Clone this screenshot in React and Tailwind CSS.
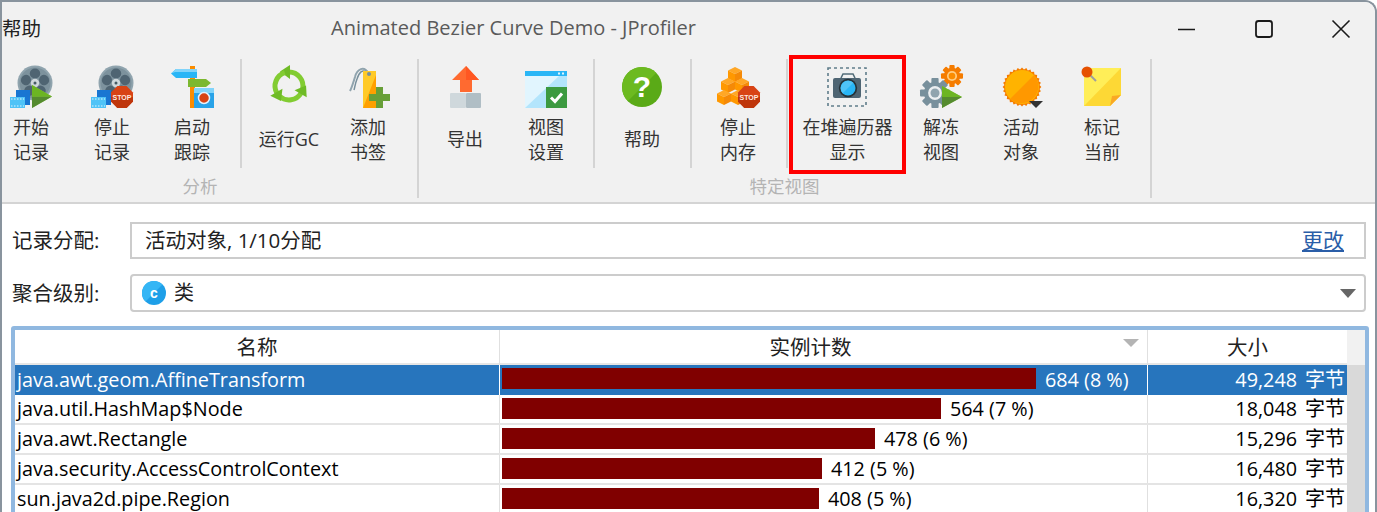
const Stop = ({ cx = 34, cy = 34, r = 11 }) => {
  const k = r * 0.42;
  const pts = [[-k,-r],[k,-r],[r,-k],[r,k],[k,r],[-k,r],[-r,k],[-r,-k]].map(([x,y]) => `${cx+x},${cy+y}`).join(" ");
  return (
    <g>
      <polygon points={pts} fill="#d84315" />
      <polygon points={`${cx-r},${cy} ${cx+r},${cy} ${cx+r},${cy+k} ${cx+k},${cy+r} ${cx-k},${cy+r} ${cx-r},${cy+k}`} fill="#bf360c" />
      <text x={cx} y={cy + 2.6} textAnchor="middle" fontSize="7" fontWeight="700" fill="#ffe9e0" fontFamily="Liberation Sans, sans-serif">STOP</text>
    </g>
  );
};

const Reel = () => (
  <g>
    <circle cx="28" cy="20" r="17.5" fill="#90a4ae" />
    <circle cx="28" cy="20" r="15.5" fill="#7d929d" />
    {[0, 72, 144, 216, 288].map((a) => (
      <ellipse key={a} cx="28" cy="10.5" rx="5.2" ry="5" fill="#4f6472" transform={`rotate(${a} 28 20)`} />
    ))}
    <circle cx="28" cy="20" r="4.2" fill="#cfd8dc" />
    <circle cx="28" cy="20" r="1.5" fill="#455a64" />
  </g>
);

const Strip = () => (
  <g>
    <rect x="9" y="27" width="14" height="15" fill="#1976d2" />
    <rect x="3" y="34" width="15" height="11" fill="#4fc3f7" />
    <path d="M4 36h13M4 43h13" stroke="#e1f5fe" strokeWidth="1" strokeDasharray="1.5 1.5" />
  </g>
);

const Play = ({ x = 25, y = 22, w = 20, h = 23 }) => (
  <g>
    <polygon points={`${x},${y} ${x + w},${y + h / 2} ${x},${y + h}`} fill="#8bc34a" />
    <polygon points={`${x},${y + h / 2} ${x + w},${y + h / 2} ${x},${y + h}`} fill="#558b2f" />
    <polygon points={`${x},${y} ${x + w},${y + h / 2} ${x},${y + h / 2}`} fill="#6cb523" />
  </g>
);

const Gear = ({ cx, cy, r, color, hole, ring }) => (
  <g>
    {[0, 45, 90, 135, 180, 225, 270, 315].map((a) => (
      <rect key={a} x={cx - r * 0.24} y={cy - r} width={r * 0.48} height={r * 0.5} rx="1" fill={color} transform={`rotate(${a} ${cx} ${cy})`} />
    ))}
    <circle cx={cx} cy={cy} r={r * 0.74} fill={color} />
    <circle cx={cx} cy={cy} r={r * 0.46} fill={ring} />
    <circle cx={cx} cy={cy} r={r * 0.3} fill={hole} />
  </g>
);

const Cube = ({ cx, y }) => (
  <g>
    <polygon points={`${cx},${y} ${cx + 7},${y + 3.5} ${cx},${y + 7} ${cx - 7},${y + 3.5}`} fill="#ffa726" />
    <polygon points={`${cx - 7},${y + 3.5} ${cx},${y + 7} ${cx},${y + 15} ${cx - 7},${y + 11.5}`} fill="#ff9800" />
    <polygon points={`${cx + 7},${y + 3.5} ${cx},${y + 7} ${cx},${y + 15} ${cx + 7},${y + 11.5}`} fill="#f58a07" />
  </g>
);

const burst = (() => {
  const p = [];
  for (let i = 0; i < 56; i++) {
    const a = (i / 56) * Math.PI * 2;
    const r = i % 2 ? 17.6 : 19.4;
    p.push(`${(25 + r * Math.cos(a)).toFixed(2)},${(24 + r * Math.sin(a)).toFixed(2)}`);
  }
  return p.join(" ");
})();

const Svg = ({ children }) => (
  <svg width="48" height="48" viewBox="0 0 48 48" className="shrink-0">{children}</svg>
);

const icons = {
  start: <Svg><Reel /><Strip /><Play /></Svg>,
  stop: <Svg><Reel /><Strip /><Stop /></Svg>,
  trace: (
    <Svg>
      <rect x="22" y="3" width="5" height="42" fill="#fb8c00" />
      <polygon points="3,10.5 8,6 29,6 29,15 8,15" fill="#29b6f6" />
      <polygon points="3,10.5 8,6 29,6 29,9 7,9" fill="#81d4fa" />
      <polygon points="20,16 38,16 43,20 38,24 20,24" fill="#7cb82f" />
      <rect x="26" y="25" width="20" height="20" fill="#29a3e8" />
      <rect x="26" y="25" width="20" height="5" fill="#81d4fa" />
      <circle cx="36" cy="35" r="5.5" fill="#d84315" stroke="#e3f2fd" strokeWidth="1.5" />
    </Svg>
  ),
  gc: (
    <Svg>
      {[0, 120, 240].map((a) => (
        <g key={a} transform={`rotate(${a} 24 23)`}>
          <path d="M37.6 26 A14 14 0 0 0 24 9" fill="none" stroke="#82cc32" strokeWidth="5" />
          <polygon points="25,2 25,16 15,8.5" fill="#6fbb26" />
        </g>
      ))}
    </Svg>
  ),
  bookmark: (
    <Svg>
      <path d="M25 11 C20 2 13 6 11 14 C9 20 8 24 6 28" fill="none" stroke="#90a4ae" strokeWidth="2" />
      <path d="M24 10 C18 5 15 10 13 16 C11 21 11 24 10 27" fill="none" stroke="#78909c" strokeWidth="1.5" />
      <polygon points="19,8 32,8 32,45 19,45" fill="#ffca28" />
      <polygon points="32,12 32,45 19,45" fill="#ffa000" />
      <circle cx="25" cy="11" r="2" fill="#78909c" />
      <rect x="32" y="24" width="7" height="21" fill="#689f38" />
      <rect x="25" y="31" width="21" height="7" fill="#689f38" />
    </Svg>
  ),
  export: (
    <Svg>
      <polygon points="25,3 38,17 31,17 31,29 19,29 19,17 11,17" fill="#ff6a30" />
      <polygon points="25,3 38,17 31,17 25,17" fill="#ff5722" />
      <rect x="9" y="30" width="16" height="15" rx="1" fill="#cfd8dc" />
      <rect x="25" y="30" width="15" height="15" rx="1" fill="#b0bec5" />
    </Svg>
  ),
  viewset: (
    <Svg>
      <rect x="3" y="8" width="42" height="37" fill="#b3e5fc" />
      <polygon points="3,13 37,13 3,45" fill="#e1f5fe" />
      <rect x="3" y="8" width="42" height="5" fill="#29b6f6" />
      <rect x="36" y="9.5" width="2" height="2" fill="#e1f5fe" />
      <rect x="40" y="9.5" width="2" height="2" fill="#e1f5fe" />
      <rect x="24" y="24" width="21" height="21" fill="#3c9a40" />
      <path d="M29 34.5 L33 38.5 L40 30.5" fill="none" stroke="#fff" strokeWidth="3" />
    </Svg>
  ),
  help: (
    <Svg>
      <circle cx="24" cy="24" r="20" fill="#5aaa17" />
      <path d="M24 4 A20 20 0 0 0 9.9 38.1 L38.1 9.9 A20 20 0 0 0 24 4Z" fill="#6cba20" />
      <text x="24" y="34" textAnchor="middle" fontSize="30" fontWeight="700" fill="#fff" fontFamily="Liberation Sans, sans-serif">?</text>
    </Svg>
  ),
  heap: (
    <Svg>
      <Cube cx={21} y={4} />
      <Cube cx={14} y={15} />
      <Cube cx={28} y={15} />
      <Cube cx={10} y={27} />
      <Cube cx={24} y={27} />
      <Stop cx={35} cy={34} r={11} />
    </Svg>
  ),
  camera: (
    <Svg>
      <rect x="4" y="5" width="38" height="38" fill="none" stroke="#607d8b" strokeWidth="1.6" strokeDasharray="3 3" />
      <path d="M17 15 L19 11 H29 L31 15" fill="none" stroke="#546e7a" strokeWidth="1.6" />
      <rect x="9" y="15" width="28" height="20" rx="2" fill="#4f6573" />
      <circle cx="24" cy="25" r="9.2" fill="#263238" />
      <circle cx="24" cy="25" r="7.5" fill="#29b6f6" />
      <path d="M18.7 30.3 A7.5 7.5 0 0 1 29.3 19.7Z" fill="#4fc3f7" />
    </Svg>
  ),
  thaw: (
    <Svg>
      <Gear cx={35} cy={13} r={11} color="#f57c00" ring="#ffcc80" hole="#fb8c00" />
      <Gear cx={18} cy={30} r={15} color="#78909c" ring="#eceff1" hole="#90a4ae" />
      <Play x={25} y={23} w={20} h={22} />
    </Svg>
  ),
  live: (
    <Svg>
      <polygon points={burst} fill="#f57c00" />
      <circle cx="25" cy="24" r="17" fill="#ffb300" />
      <path d="M37 12 A17 17 0 0 1 13 36Z" fill="#ff9800" />
      <polygon points="32,38 46,38 39,45" fill="#333" />
    </Svg>
  ),
  mark: (
    <Svg>
      <polygon points="6,5 43,5 43,32 32,43 6,43" fill="#ffee58" />
      <polygon points="43,5 43,32 32,43 6,43" fill="#fdd835" />
      <polygon points="43,32 34,33 32,43" fill="#f9a825" />
      <path d="M10 10 L18 18" stroke="#9e9e9e" strokeWidth="2" />
      <circle cx="9" cy="9" r="5.5" fill="#e65100" />
    </Svg>
  ),
};

const Tool = ({ icon, lines, className }) => (
  <div className={`flex h-[119px] shrink-0 flex-col items-center pt-[8px] ${className}`}>
    {icons[icon]}
    <div className={`mt-[4px] flex h-[50px] flex-col items-center justify-center whitespace-nowrap text-[18px] leading-[25px] text-[#333] ${lines.length === 1 ? "pb-[2px]" : ""}`}>
      {lines.map((l) => <span key={l}>{l}</span>)}
    </div>
  </div>
);

const Sep = ({ className = "" }) => <div className={`mt-[4px] h-[109px] w-[2px] shrink-0 bg-[#d4d4d4] ${className}`} />;
const GroupSep = ({ className = "" }) => <div className={`mt-[4px] h-[139px] w-[2px] shrink-0 bg-[#d4d4d4] ${className}`} />;

const rows = [
  { name: "java.awt.geom.AffineTransform", bar: "w-[534px]", count: "684 (8 %)", num: "49,248", sel: true },
  { name: "java.util.HashMap$Node", bar: "w-[439px]", count: "564 (7 %)", num: "18,048" },
  { name: "java.awt.Rectangle", bar: "w-[373px]", count: "478 (6 %)", num: "15,296" },
  { name: "java.security.AccessControlContext", bar: "w-[320px]", count: "412 (5 %)", num: "16,480" },
  { name: "sun.java2d.pipe.Region", bar: "w-[317px]", count: "408 (5 %)", num: "16,320" },
];

export default function App() {
  return (
    <div className="flex h-[512px] w-[1377px] flex-col overflow-hidden rounded-tr-[12px] border-x-2 border-t-2 border-[#89949e] bg-white font-['Open_Sans','Noto_Sans_CJK_SC',sans-serif] text-black">
      {/* title bar */}
      <div className="relative flex h-[53px] shrink-0 items-center justify-between bg-[#f1f1f1]">
        <span className="text-[19.5px] text-[#222]">帮助</span>
        <span className="absolute left-[329px] top-[11px] whitespace-nowrap text-[20px] leading-[30px] text-[#5a5a5a]">Animated Bezier Curve Demo - JProfiler</span>
        <svg width="198" height="24" viewBox="0 0 198 24" fill="none" stroke="#1a1a1a">
          <path d="M1 12.5 H18" strokeWidth="1.3" />
          <rect x="79" y="4" width="16" height="16" rx="2.5" strokeWidth="1.8" />
          <path d="M155.5 3.5 L172.5 20.5 M172.5 3.5 L155.5 20.5" strokeWidth="1.6" />
        </svg>
      </div>

      {/* toolbar */}
      <div className="flex h-[149px] shrink-0 border-b-2 border-[#d4d4d4] bg-[#f1f1f1]">
        <div className="flex w-[415px] shrink-0 flex-col">
          <div className="flex">
            <Tool icon="start" lines={["开始", "记录"]} className="w-[58px]" />
            <Tool icon="stop" lines={["停止", "记录"]} className="ml-[12px] w-[80px]" />
            <Tool icon="trace" lines={["启动", "跟踪"]} className="w-[80px]" />
            <Sep className="ml-[8px]" />
            <Tool icon="gc" lines={["运行GC"]} className="w-[94px]" />
            <Tool icon="bookmark" lines={["添加", "书签"]} className="w-[64px]" />
          </div>
          <div className="pr-[19px] text-center text-[17.5px] leading-[24px] text-[#b4b4b4]">分析</div>
        </div>
        <GroupSep />
        <div className="flex w-[731px] shrink-0 flex-col">
          <div className="flex">
            <Tool icon="export" lines={["导出"]} className="w-[92px]" />
            <Tool icon="viewset" lines={["视图", "设置"]} className="w-[70px]" />
            <Sep className="ml-[12px]" />
            <Tool icon="help" lines={["帮助"]} className="w-[94px]" />
            <Sep className="ml-[1px]" />
            <Tool icon="heap" lines={["停止", "内存"]} className="w-[92px]" />
            <Sep className="ml-[2px]" />
            <div className="ml-[1px] flex h-[119px] w-[117px] shrink-0 flex-col items-center border-4 border-[#f00] pt-[4px]">
              {icons.camera}
              <div className="flex h-[50px] flex-col items-center justify-center whitespace-nowrap pt-[8px] text-[18px] leading-[25px] text-[#333]">
                <span>在堆遍历器</span>
                <span>显示</span>
              </div>
            </div>
            <Tool icon="thaw" lines={["解冻", "视图"]} className="w-[70px]" />
            <Tool icon="live" lines={["活动", "对象"]} className="w-[90px]" />
            <Tool icon="mark" lines={["标记", "当前"]} className="w-[72px]" />
          </div>
          <div className="text-center text-[17.5px] leading-[24px] text-[#b4b4b4]">特定视图</div>
        </div>
        <GroupSep />
      </div>

      {/* form + table */}
      <div className="flex flex-col pl-[9px] pr-[6px]">
        <div className="mr-[3px] mt-[18px] flex h-[37px] items-center">
          <span className="w-[119px] shrink-0 pl-[1px] text-[20.5px] text-[#222]">记录分配:</span>
          <div className="flex h-full flex-1 items-center justify-between border-2 border-[#cccccc] pl-[13px] pr-[20px] text-[20.5px] text-[#222]">
            <span>活动对象, 1/10分配</span>
            <span className="text-[21px] text-[#2a5ea8] underline">更改</span>
          </div>
        </div>
        <div className="mr-[3px] mt-[15px] flex h-[38px] items-center">
          <span className="w-[119px] shrink-0 pl-[1px] text-[20.5px] text-[#222]">聚合级别:</span>
          <div className="flex h-full flex-1 items-center justify-between rounded-[4px] border-2 border-[#cccccc] pl-[10px] pr-[8px] text-[20px] text-[#222]">
            <div className="flex items-center gap-[8px]">
              <svg width="24" height="24" viewBox="0 0 24 24">
                <circle cx="12" cy="12" r="12" fill="#1e9fe8" />
                <path d="M12 0 A12 12 0 0 0 3.5 20.5 L20.5 3.5 A12 12 0 0 0 12 0Z" fill="#35b6f5" />
                <text x="12" y="17" textAnchor="middle" fontSize="14" fontWeight="700" fill="#fff" fontFamily="Liberation Sans, sans-serif">c</text>
              </svg>
              <span>类</span>
            </div>
            <svg width="16" height="9" viewBox="0 0 16 9"><polygon points="0,0 16,0 8,9" fill="#666" /></svg>
          </div>
        </div>

        <div className="mt-[14px] flex flex-col rounded-t-[3px] border-4 border-[#90b8e0]">
          <div className="flex">
            <div className="flex w-[1332px] shrink-0 flex-col">
              {/* header */}
              <div className="grid h-[35px] grid-cols-[485px_648px_199px] border-b-2 border-[#e6e6e6] text-[20.5px] leading-[35px] text-[#222]">
                <div className="border-r border-[#e0e0e0] text-center">名称</div>
                <div className="relative border-r border-[#e0e0e0] pr-[26px] text-center">
                  实例计数
                  <svg width="16" height="8" viewBox="0 0 16 8" className="absolute right-[8px] top-[9px]"><polygon points="0,0 16,0 8,8" fill="#b4b4b4" /></svg>
                </div>
                <div className="text-center">大小</div>
              </div>
              {/* rows */}
              {rows.map((r) => (
                <div key={r.name} className={`grid h-[30px] grid-cols-[485px_648px_199px] border-b-2 text-[19.8px] ${r.sel ? "border-transparent bg-[#2775bd] leading-[30px] text-white" : "border-[#e4e4e4] leading-[28px] text-black"}`}>
                  <div className={`whitespace-nowrap border-r pl-[2px] ${r.sel ? "border-white" : "border-[#e0e0e0]"}`}>{r.name}</div>
                  <div className={`flex gap-[9px] border-r pl-[2px] ${r.sel ? "border-white" : "border-[#e0e0e0]"}`}>
                    <div className={`mt-[3px] h-[21px] bg-[#800000] ${r.bar}`} />
                    <span className="whitespace-nowrap">{r.count}</span>
                  </div>
                  <div className="whitespace-nowrap pr-[2px] text-right">
                    {r.num}
                    <span className="ml-[8px] text-[20px]">字节</span>
                  </div>
                </div>
              ))}
            </div>
            <div className="flex w-[18px] shrink-0 flex-col bg-[#d9d9d9]">
              <div className="h-[35px] bg-[#f1f1f1]" />
            </div>
          </div>
        </div>
      </div>
    </div>
  );
}
